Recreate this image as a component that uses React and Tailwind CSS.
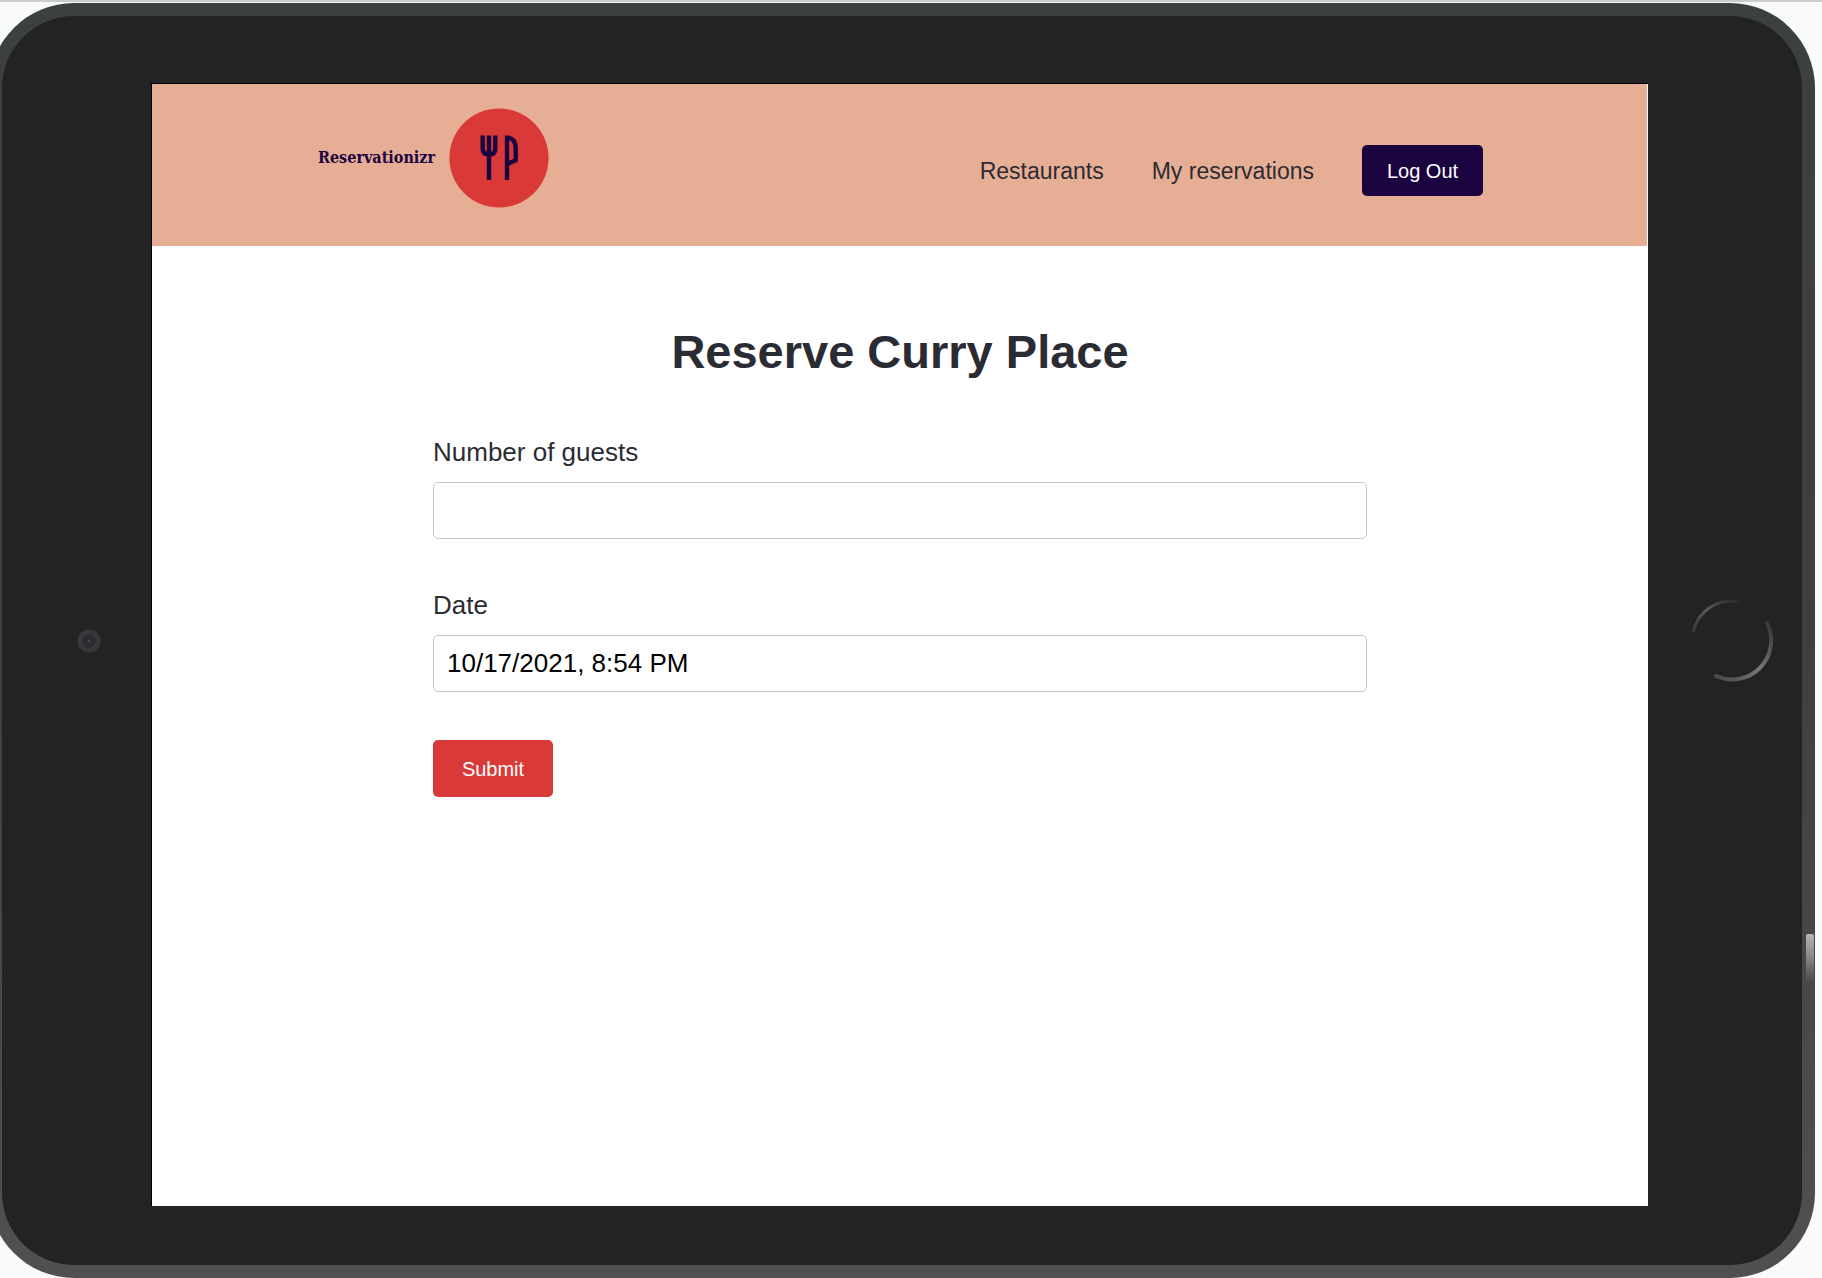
import React from "react";

function Logo() {
  return (
    <a href="#home" className="flex items-center gap-[14px] text-[#1b0340]">
      <span className="font-['DejaVu_Serif_Condensed','DejaVu_Serif',serif] text-[16px] leading-6 font-bold">
        Reservationizr
      </span>
      <svg viewBox="0 0 100 100" className="size-[100px] shrink-0" aria-hidden="true">
        <circle cx="50" cy="50" r="49.6" fill="#d93a38" />
        <g fill="none" stroke="#1b0340">
          <path d="M33.700 27.500v13q0 6 6.300 6t6.300-6v-13M40 27.500v44.500" strokeWidth="4.400" />
          <path d="M58 72V29.700h1.500q7.200 1.500 7.200 11v11.500L58 56.200" strokeWidth="4.400" />
        </g>
      </svg>
    </a>
  );
}

function Header() {
  return (
    <header className="mr-px flex h-[162px] items-start justify-between bg-[#e6ae94] pr-[164px] pl-[166px]">
      <div className="pt-6">
        <Logo />
      </div>
      <nav className="flex items-center gap-12 pt-[61px] text-[23px] leading-7 text-[#2b2b33]">
        <a href="#restaurants">Restaurants</a>
        <a href="#reservations">My reservations</a>
        <button type="button" className="h-[51px] w-[121px] rounded-[5px] bg-[#1b0340] text-[20px] text-white">
          Log Out
        </button>
      </nav>
    </header>
  );
}

function Field({ id, label, value }) {
  return (
    <div className="mb-12 flex flex-col gap-3">
      <label htmlFor={id} className="text-[26px] leading-9 text-[#2b2b33]">
        {label}
      </label>
      <input
        id={id}
        type="text"
        defaultValue={value}
        className="h-[57px] w-full rounded-[5px] border border-[#c6c6c6] bg-white px-[13px] text-[26px] text-black outline-none"
      />
    </div>
  );
}

function ReservationForm() {
  return (
    <main className="mx-auto w-full max-w-[934px] pt-20">
      <h1 className="text-center text-[47px] leading-[52px] font-bold text-[#2b2b33]">Reserve Curry Place</h1>
      <form className="pt-14" onSubmit={(e) => e.preventDefault()}>
        <Field id="guests" label="Number of guests" value="" />
        <Field id="date" label="Date" value="10/17/2021, 8:54 PM" />
        <button type="submit" className="h-[57px] w-[120px] rounded-[5px] bg-[#d93a38] text-[20px] text-white">
          Submit
        </button>
      </form>
    </main>
  );
}

function Camera() {
  return (
    <div className="flex w-[149px] shrink-0 items-center justify-center">
      <svg viewBox="0 0 26 26" className="ml-6 size-[26px]" aria-hidden="true">
        <circle cx="13" cy="13" r="9" fill="#26262b" stroke="#38383b" strokeWidth="5" />
        <circle cx="13" cy="13" r="4" fill="none" stroke="#303038" strokeWidth="2" />
        <circle cx="13" cy="13" r="1.500" fill="#44444c" />
      </svg>
    </div>
  );
}

function HomeButton() {
  return (
    <div className="flex w-[154px] shrink-0 items-center justify-center">
      <button type="button" aria-label="Home" className="ml-[14px] size-[84px] rounded-full">
        <svg viewBox="0 0 84 84" className="size-full" fill="none" strokeLinecap="round">
          <defs>
            <linearGradient id="ringTop" x1="0" y1="1" x2="1" y2="0">
              <stop offset="0" stopColor="#3a3a3a" />
              <stop offset="0.5" stopColor="#5a5a5a" />
              <stop offset="1" stopColor="#292929" />
            </linearGradient>
            <linearGradient id="ringBottom" x1="1" y1="0" x2="0" y2="1">
              <stop offset="0" stopColor="#333" />
              <stop offset="0.5" stopColor="#777" />
              <stop offset="1" stopColor="#484848" />
            </linearGradient>
          </defs>
          <path d="M3.500 32A39 39 0 0 1 48 2.500" stroke="url(#ringTop)" strokeWidth="3" />
          <path d="M77 24A39 39 0 0 1 26 77" stroke="url(#ringBottom)" strokeWidth="4" />
        </svg>
      </button>
    </div>
  );
}

export default function App() {
  return (
    <div className="flex min-h-screen flex-col overflow-hidden border-t-2 border-[#cbccd2] bg-[#f9fbfa] font-['Liberation_Sans',Arial,sans-serif]">
      <div className="relative mt-px mr-[7px] -ml-[11px] flex grow flex-col rounded-[85px] bg-linear-to-b from-[#3b413f] via-[#3f3f3f] to-[#505050] p-[13px]">
        <div className="absolute top-[73%] right-px h-12 w-[8px] rounded-t-[2px] bg-linear-to-b from-[#b5b5b5] via-[#858585] to-[#484848]" />
        <div className="flex grow rounded-[72px] bg-[#232323]">
          <Camera />
          <div className="mt-[67px] mb-[59px] flex min-w-0 grow flex-col border-t border-l border-black bg-white">
            <Header />
            <ReservationForm />
          </div>
          <HomeButton />
        </div>
      </div>
    </div>
  );
}
